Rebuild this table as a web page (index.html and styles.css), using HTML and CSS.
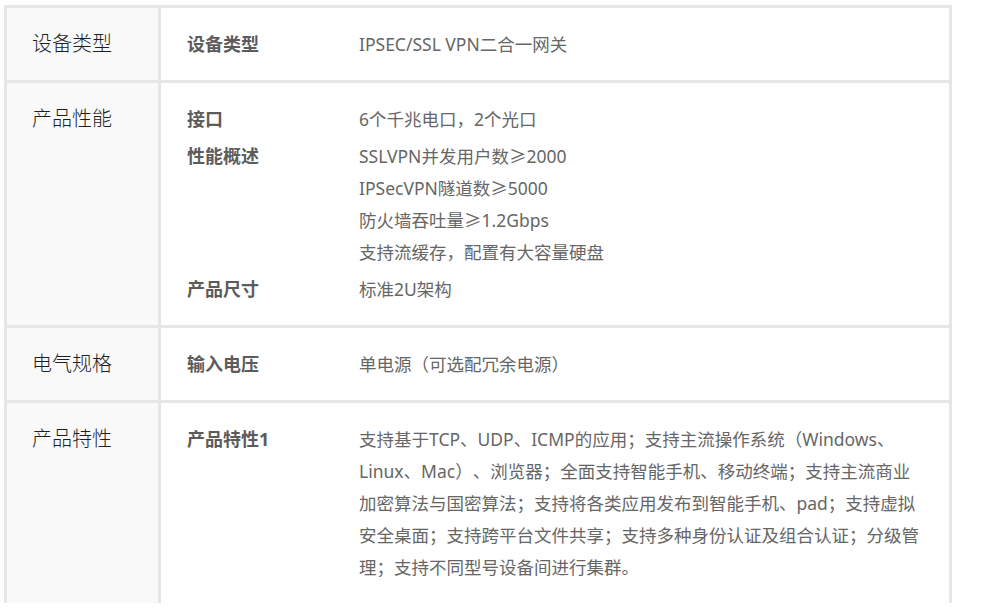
FILE: index.html
```html
<!DOCTYPE html>
<html>
<head>
    <meta charset="utf-8">
    <title>产品参数</title>
    <link rel="stylesheet" href="styles.css">
</head>
<body>

    <div class="SpecWrap">
        <table class="SpecTable">
            <tr>
                <td class="Group">设备类型</td>
                <td class="Detail">
                    <div class="Item">
                        <span class="Label">设备类型</span>
                        <span class="Value">IPSEC/SSL VPN二合一网关</span>
                    </div>
                </td>
            </tr>
            <tr>
                <td class="Group">产品性能</td>
                <td class="Detail">
                    <div class="Item">
                        <span class="Label">接口</span>
                        <span class="Value">6个千兆电口，2个光口</span>
                    </div>
                    <div class="Item">
                        <span class="Label">性能概述</span>
                        <span class="Value">SSLVPN并发用户数≥2000<br>IPSecVPN隧道数≥5000<br>防火墙吞吐量≥1.2Gbps<br>支持流缓存，配置有大容量硬盘</span>
                    </div>
                    <div class="Item">
                        <span class="Label">产品尺寸</span>
                        <span class="Value">标准2U架构</span>
                    </div>
                </td>
            </tr>
            <tr>
                <td class="Group">电气规格</td>
                <td class="Detail">
                    <div class="Item">
                        <span class="Label">输入电压</span>
                        <span class="Value">单电源（可选配冗余电源）</span>
                    </div>
                </td>
            </tr>
            <tr>
                <td class="Group">产品特性</td>
                <td class="Detail">
                    <div class="Item">
                        <span class="Label">产品特性1</span>
                        <span class="Value">支持基于TCP、UDP、ICMP的应用；支持主流操作系统（Windows、Linux、Mac）、浏览器；全面支持智能手机、移动终端；支持主流商业加密算法与国密算法；支持将各类应用发布到智能手机、pad；支持虚拟安全桌面；支持跨平台文件共享；支持多种身份认证及组合认证；分级管理；支持不同型号设备间进行集群。</span>
                    </div>
                </td>
            </tr>
        </table>
    </div>

</body>
</html>
```

FILE: styles.css
```css
body {
    margin: 0;
    font-family: "Noto Sans", "Noto Sans CJK SC", sans-serif;
    text-spacing-trim: space-all;
    background: #fff;
}

.SpecWrap {
    padding: 5px 0 0 4px;
}

.SpecTable {
    width: 948px;
    border-spacing: 0;
    border: 3px solid #e6e6e6;
    border-bottom: none;
}

.SpecTable td {
    vertical-align: top;
    border-bottom: 3px solid #e6e6e6;
    padding: 20px 26px 20px 26px;
    line-height: 32px;
}

.SpecTable tr:last-child td {
    border-bottom: none;
}

.Group {
    width: 100px;
    padding-left: 25px !important;
    background: #f9f9f9;
    border-right: 3px solid #e6e6e6;
    font-size: 20px;
    font-weight: 300;
    color: #1f1f1f;
}

.Detail {
    color: #666;
}

.Item {
    display: grid;
    grid-template-columns: 172px 1fr;
}

.Item + .Item {
    margin-top: 5px;
}

.Label {
    font-size: 18px;
    font-weight: bold;
    color: #5c5c5c;
}

.Value {
    font-size: 17.5px;
}
```
